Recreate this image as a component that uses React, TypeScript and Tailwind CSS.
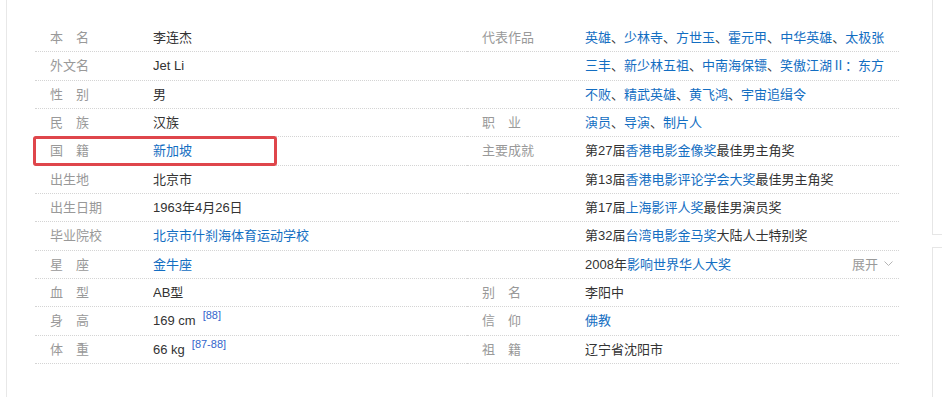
import type { ReactNode } from 'react';

const Link = ({ children }: { children: ReactNode }) => (
  <a className="text-[#136ec2] no-underline cursor-pointer">{children}</a>
);

const Sep = () => <span>、</span>;

const Ref = ({ n }: { n: string }) => (
  <sup className="relative -top-[6px] ml-[7px] text-[11px] text-[#3366cc] align-baseline leading-none">
    [{n}]
  </sup>
);

type Line = { label?: string; value: ReactNode; extra?: ReactNode; mark?: boolean };

function Row({ label, value, extra, mark }: Line) {
  return (
    <div className="relative flex h-[28.33px] items-center border-b border-dotted border-[#d4d4d4] leading-[27.33px]">
      <div className="w-[118px] shrink-0 pl-[15px] text-[#999]">{label}</div>
      <div className="flex-1 truncate text-[#333]">{value}</div>
      {extra}
      {mark && (
        <div className="pointer-events-none absolute -left-[2px] -top-[1px] h-[30px] w-[244px] rounded-[3px] border-[3px] border-[#df464b]" />
      )}
    </div>
  );
}

const leftRows: Line[] = [
  { label: '本\u3000名', value: '李连杰' },
  { label: '外文名', value: 'Jet Li' },
  { label: '性\u3000别', value: '男' },
  { label: '民\u3000族', value: '汉族' },
  { label: '国\u3000籍', value: <Link>新加坡</Link>, mark: true },
  { label: '出生地', value: '北京市' },
  { label: '出生日期', value: '1963年4月26日' },
  { label: '毕业院校', value: <Link>北京市什刹海体育运动学校</Link> },
  { label: '星\u3000座', value: <Link>金牛座</Link> },
  { label: '血\u3000型', value: 'AB型' },
  { label: '身\u3000高', value: <>169 cm<Ref n="88" /></> },
  { label: '体\u3000重', value: <>66 kg<Ref n="87-88" /></> },
];

const rightRows: Line[] = [
  {
    label: '代表作品',
    value: (
      <>
        <Link>英雄</Link><Sep /><Link>少林寺</Link><Sep /><Link>方世玉</Link><Sep />
        <Link>霍元甲</Link><Sep /><Link>中华英雄</Link><Sep /><Link>太极张</Link>
      </>
    ),
  },
  {
    value: (
      <>
        <Link>三丰</Link><Sep /><Link>新少林五祖</Link><Sep /><Link>中南海保镖</Link><Sep />
        <Link>笑傲江湖Ⅱ：东方</Link>
      </>
    ),
  },
  {
    value: (
      <>
        <Link>不败</Link><Sep /><Link>精武英雄</Link><Sep /><Link>黄飞鸿</Link><Sep />
        <Link>宇宙追缉令</Link>
      </>
    ),
  },
  {
    label: '职\u3000业',
    value: (
      <>
        <Link>演员</Link><Sep /><Link>导演</Link><Sep /><Link>制片人</Link>
      </>
    ),
  },
  { label: '主要成就', value: <>第27届<Link>香港电影金像奖</Link>最佳男主角奖</> },
  { value: <>第13届<Link>香港电影评论学会大奖</Link>最佳男主角奖</> },
  { value: <>第17届<Link>上海影评人奖</Link>最佳男演员奖</> },
  { value: <>第32届<Link>台湾电影金马奖</Link>大陆人士特别奖</> },
  {
    value: <>2008年<Link>影响世界华人大奖</Link></>,
    extra: (
      <span className="flex items-center gap-[6px] pr-[6px] text-[#999]">
        展开
        <svg width="9" height="6" viewBox="0 0 9 6" fill="none" stroke="#b5b5b5" strokeWidth="1">
          <polyline points="0.5,0.5 4.5,4.5 8.5,0.5" />
        </svg>
      </span>
    ),
  },
  { label: '别\u3000名', value: '李阳中' },
  { label: '信\u3000仰', value: <Link>佛教</Link> },
  { label: '祖\u3000籍', value: '辽宁省沈阳市' },
];

export default function App() {
  return (
    <div className="flex h-[397px] w-[942px] overflow-hidden bg-white font-['Liberation_Sans','Noto_Sans_CJK_SC',sans-serif] text-[13px]">
      <div className="w-[6px] shrink-0" />
      <main className="flex-1 border-l border-[#e8e8e8] pl-[28px] pt-[24px]">
        <div className="grid w-[864px] grid-cols-2">
          <div className="flex flex-col">
            {leftRows.map((r, i) => (
              <Row key={i} {...r} />
            ))}
          </div>
          <div className="flex flex-col">
            {rightRows.map((r, i) => (
              <Row key={i} {...r} />
            ))}
          </div>
        </div>
      </main>
      <aside className="flex w-[10px] shrink-0 flex-col gap-[12px]">
        <div className="h-[235px] border-b border-l border-[#e6e6e6]" />
        <div className="flex-1 border-l border-t border-[#e6e6e6]" />
      </aside>
    </div>
  );
}
